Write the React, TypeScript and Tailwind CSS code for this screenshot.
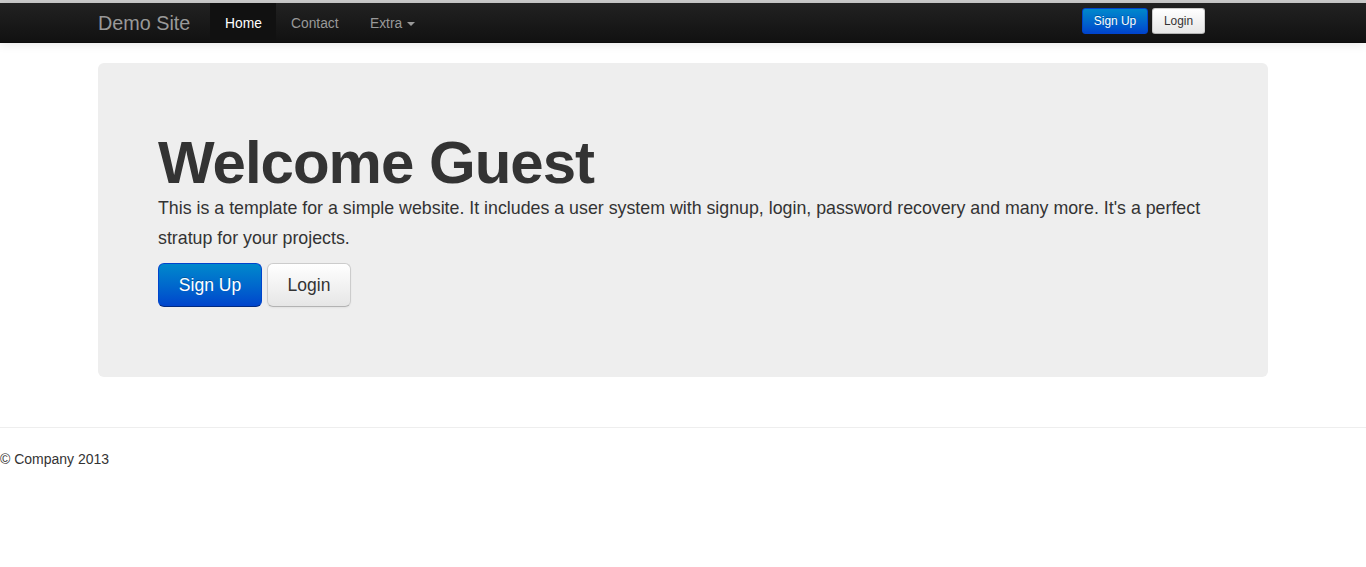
export default function App() {
  const font = { fontFamily: '"Liberation Sans", Arial, Helvetica, sans-serif' }

  return (
    <div style={font} className="min-h-[567px] bg-white text-[14px] leading-[20px] text-[#333]">
      <div className="h-[3px] bg-[#cdcdcd]" />
      <header className="h-[40px] border-b border-[#0d0d0d] bg-gradient-to-b from-[#222] to-[#111] shadow-[0_1px_10px_rgba(0,0,0,0.1)]">
        <div className="mx-auto flex h-full w-[1170px] items-stretch">
          <a className="w-[112px] py-[10px] text-[19.8px] leading-[20px] text-[#999]">Demo Site</a>
          <nav className="flex">
            <a className="w-[66px] bg-[#111] pb-[9px] pl-[15px] pt-[11px] text-[13.8px] text-white">Home</a>
            <a className="w-[79px] pb-[9px] pl-[15px] pt-[11px] text-[13.8px] text-[#999]">Contact</a>
            <a className="flex items-start px-[15px] pb-[9px] pt-[11px] text-[13.8px] text-[#999]">
              Extra
              <span className="ml-[5px] mt-[8px] h-0 w-0 border-x-[4px] border-t-[4px] border-x-transparent border-t-[#999]" />
            </a>
          </nav>
          <div className="ml-auto mr-[63px] flex items-start gap-[4px] pt-[5px]">
            <button className="h-[26px] w-[66px] rounded-[3px] border border-[#04c] bg-gradient-to-b from-[#08c] to-[#04c] text-[11.9px] leading-[20px] text-white [text-shadow:0_-1px_0_rgba(0,0,0,0.25)]">
              Sign Up
            </button>
            <button className="h-[26px] w-[53px] rounded-[3px] border border-[#ccc] border-b-[#b3b3b3] bg-gradient-to-b from-white to-[#e6e6e6] text-[11.9px] leading-[20px] text-[#333] shadow-[inset_0_1px_0_rgba(255,255,255,0.2),0_1px_2px_rgba(0,0,0,0.05)]">
              Login
            </button>
          </div>
        </div>
      </header>

      <main className="mx-auto w-[1170px] pt-[20px]">
        <section className="rounded-[6px] bg-[#eee] p-[60px] text-[17.8px] font-extralight leading-[30px]">
          <h1 className="mt-[10px] text-[60px] font-bold leading-[60px] tracking-[-1px]">Welcome Guest</h1>
          <p className="mb-[10px]">
            This is a template for a simple website. It includes a user system with signup, login, password recovery and
            many more. It's a perfect stratup for your projects.
          </p>
          <div className="mb-[10px] flex gap-[5px]">
            <button className="h-[44px] w-[104px] rounded-[6px] border border-[#04c] border-b-[#002a80] bg-gradient-to-b from-[#08c] to-[#04c] text-[17.5px] leading-[20px] font-normal text-white [text-shadow:0_-1px_0_rgba(0,0,0,0.25)]">
              Sign Up
            </button>
            <button className="h-[44px] w-[84px] rounded-[6px] border border-[#ccc] border-b-[#b3b3b3] bg-gradient-to-b from-white to-[#e6e6e6] text-[17.5px] leading-[20px] font-normal text-[#333] shadow-[inset_0_1px_0_rgba(255,255,255,0.2),0_1px_2px_rgba(0,0,0,0.05)]">
              Login
            </button>
          </div>
        </section>
      </main>

      <hr className="mb-[20px] mt-[50px] border-t border-b border-t-[#eee] border-b-white" />
      <footer>
        <p>© Company 2013</p>
      </footer>
    </div>
  )
}
